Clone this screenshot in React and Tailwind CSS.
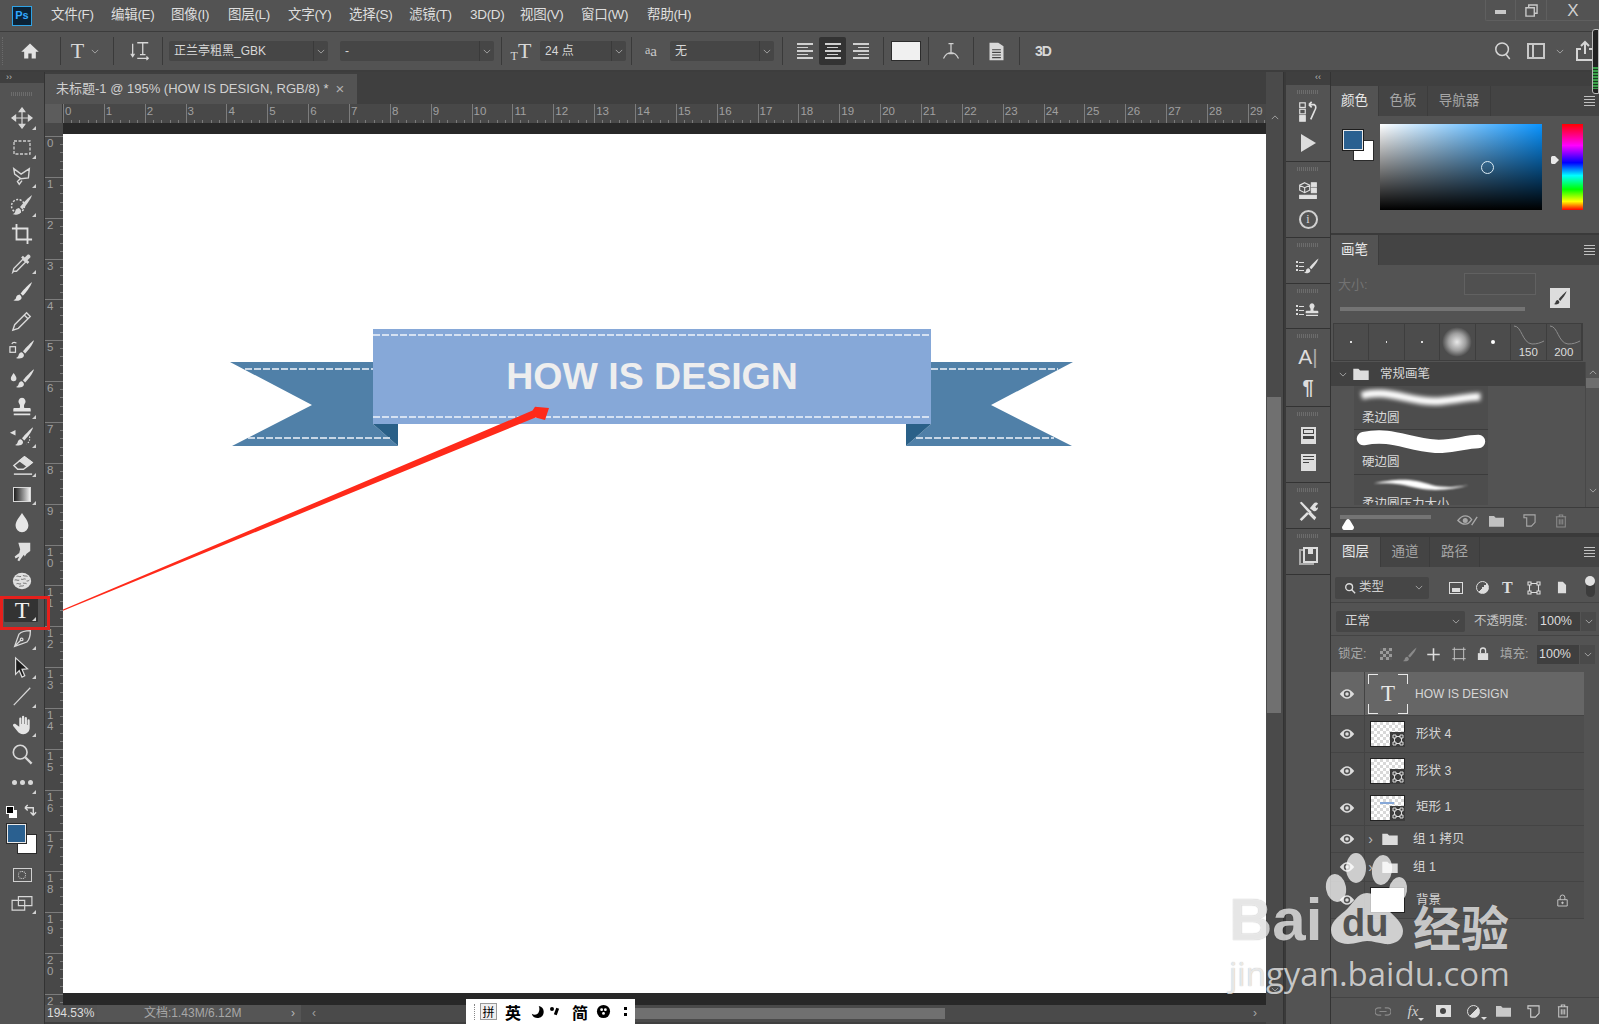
import React from "react";

const Ico = ({ className = "w-[22px] h-[22px]", children, box = "0 0 24 24" }) => (
  <svg viewBox={box} className={className} fill="none" stroke="none">
    {children}
  </svg>
);

const BrushShape = () => (
  <>
    <path d="M22 2c-3 2-9 8-12 12l2.4 2.4C15.500 13 20.500 7 22 2z" fill="currentColor" />
    <path d="M8.800 15c-2 .3-3.300 1.600-3.500 3.200-.2 1.300-1.100 2.300-2.800 2.900 3 1.100 7.300.8 8.400-1.800.5-1.300 0-2.800-2.100-4.300z" fill="currentColor" />
  </>
);

const Chevron = ({ className = "" }) => (
  <svg viewBox="0 0 10 6" className={`w-[8px] h-[5px] ${className}`} fill="none" stroke="#b5b5b5" strokeWidth="1">
    <path d="M1 1l4 4 4-4" />
  </svg>
);

const Sep = () => <div className="w-px h-[28px] bg-[#3a3a3a]" />;

const menuItems = [
  ["文件(F)", "w-[60px]"],
  ["编辑(E)", "w-[60px]"],
  ["图像(I)", "w-[57px]"],
  ["图层(L)", "w-[60px]"],
  ["文字(Y)", "w-[61px]"],
  ["选择(S)", "w-[60px]"],
  ["滤镜(T)", "w-[61px]"],
  ["3D(D)", "w-[50px]"],
  ["视图(V)", "w-[61px]"],
  ["窗口(W)", "w-[66px]"],
  ["帮助(H)", "w-[60px]"],
];

const MenuBar = () => (
  <div className="flex items-center h-[32px] bg-[#535353] border-b border-[#3c3c3c] relative">
    <div className="w-[20px] h-[20px] ml-[12px] mr-[19px] bg-[#0b2236] border border-[#2fa3e6] flex items-center justify-center text-[#31a8ff] text-[11px] font-bold">
      Ps
    </div>
    {menuItems.map(([t, w]) => (
      <div key={t} className={`${w} text-[13.500px] text-[#dedede] whitespace-nowrap tracking-[-0.3px]`}>
        {t}
      </div>
    ))}
    <div className="ml-auto flex items-center h-[21px] self-start border-b border-l border-[#5f5f5f] rounded-bl-[2px]">
      <div className="w-[30px] pl-[-2px] h-full flex items-center justify-center border-r border-[#5f5f5f]">
        <div className="w-[11px] h-[4px] mt-[4px] bg-[#c8c8c8]" />
      </div>
      <div className="w-[31px] h-full flex items-center justify-center border-r border-[#5f5f5f]">
        <svg viewBox="0 0 14 14" className="w-[13px] h-[13px]" fill="none" stroke="#c8c8c8" strokeWidth="1.500">
          <path d="M4 4V1h9v9h-3M1 4h9v9H1z" />
        </svg>
      </div>
      <div className="w-[52px] h-full flex items-center justify-center text-[#d0d0d0] text-[17px] leading-none">X</div>
    </div>
  </div>
);

const Select = ({ className, text, chevW = "w-[15px]" }) => (
  <div className={`flex h-[20px] items-stretch bg-[#464646] rounded-[2px] ${className}`}>
    <div className="flex-1 text-[12px] text-[#d8d8d8] px-[5px] leading-[20px] whitespace-nowrap overflow-hidden">{text}</div>
    <div className={`${chevW} border-l border-[#3a3a3a] flex items-center justify-center`}>
      <Chevron />
    </div>
  </div>
);

const AlignIcon = ({ widths }) => (
  <div className={`flex flex-col gap-[2px] w-[16px] ${widths[0]}`}>
    {widths[1].map((w, i) => (
      <div key={i} className={`h-[1.500px] bg-[#d0d0d0] ${w}`} />
    ))}
  </div>
);

const alignRows = ["w-[16px]", "w-[11px]", "w-[16px]", "w-[11px]", "w-[16px]"];

const OptionsBar = () => (
  <div className="flex items-center h-[40px] bg-[#535353] border-b-2 border-[#3d3d3d] relative">
    <div className="w-[6px] ml-[2px] h-[28px] border-l border-dotted border-[#6a6a6a]" />
    <div className="w-[52px] pr-[8px] flex justify-center text-[#e2e2e2]">
      <Ico className="w-[20px] h-[20px]">
        <path d="M12 3L1.500 13H5v8h5v-6h4v6h5v-8h3.500z" fill="currentColor" />
      </Ico>
    </div>
    <Sep />
    <div className="w-[52px] pr-[4px] flex items-center justify-center gap-[7px]">
      <span className="font-['Liberation_Serif'] text-[22px] leading-none text-[#d8d8d8]">T</span>
      <Chevron />
    </div>
    <Sep />
    <div className="w-[48px] pl-[3px] flex justify-center text-[#d8d8d8]">
      <svg viewBox="0 0 24 24" className="w-[22px] h-[22px]" fill="none" stroke="currentColor" strokeWidth="1.400">
        <path d="M4 4v13M2 15l2 3 2-3M9 3h12M15 3v13M12 16h6M9 20h12M19 18l2 2-2 2" />
      </svg>
    </div>
    <Sep />
    <Select className="w-[159px] ml-[6px]" text="正兰亭粗黑_GBK" />
    <Select className="w-[154px] ml-[12px]" text="-" />
    <div className="ml-[7px]"><Sep /></div>
    <div className="w-[38px] flex justify-center items-end text-[#d8d8d8] font-['Liberation_Serif'] leading-none">
      <span className="text-[12px]">T</span>
      <span className="text-[22px]">T</span>
    </div>
    <Select className="w-[86px]" text="24 点" />
    <div className="ml-[5px]"><Sep /></div>
    <div className="w-[38px] text-center text-[#c8c8c8] text-[15px] leading-none font-['Liberation_Serif']">
      <span className="text-[12px] align-top">a</span>a
    </div>
    <Select className="w-[104px]" text="  无" />
    <div className="ml-[8px]"><Sep /></div>
    <div className="flex items-center ml-[8px]">
      <div className="w-[28px] flex justify-center">
        <AlignIcon widths={["items-start", alignRows]} />
      </div>
      <div className="w-[27px] h-[28px] bg-[#333333] rounded-[2px] flex items-center justify-center">
        <AlignIcon widths={["items-center", alignRows]} />
      </div>
      <div className="w-[30px] flex justify-center">
        <AlignIcon widths={["items-end", alignRows]} />
      </div>
    </div>
    <div className="ml-[7px]"><Sep /></div>
    <div className="w-[30px] h-[20px] ml-[7px] mr-[7px] bg-[#f0f0f0] border border-[#2c2c2c]" />
    <Sep />
    <div className="w-[44px] flex justify-center text-[#d0d0d0]">
      <svg viewBox="0 0 24 24" className="w-[20px] h-[22px]" fill="none" stroke="currentColor" strokeWidth="1.500">
        <path d="M9 3h6M12 3v12M9 15h6M3 21c3-6 6-7 9-7s6 1 9 7" />
      </svg>
    </div>
    <Sep />
    <div className="w-[45px] flex justify-center text-[#d8d8d8]">
      <svg viewBox="0 0 20 24" className="w-[19px] h-[21px]">
        <path d="M2 2h10l6 4v16H2z" fill="currentColor" />
        <path d="M5 10h10M5 13h10M5 16h10M5 19h10" stroke="#444" strokeWidth="1.200" />
      </svg>
    </div>
    <Sep />
    <div className="w-[46px] text-center text-[14px] font-bold text-[#d8d8d8] tracking-[-1px] font-['Liberation_Sans']">3D</div>
    <div className="ml-auto flex items-center mr-[4px] text-[#d5d5d5]">
      <svg viewBox="0 0 20 22" className="w-[18px] h-[20px]" fill="none" stroke="currentColor" strokeWidth="1.700">
        <circle cx="9" cy="9" r="7" />
        <path d="M13.500 15l4 5" />
      </svg>
      <div className="w-[18px] h-[16px] ml-[15px] border-2 border-[#c8c8c8] flex">
        <div className="w-[5px] border-r-2 border-[#c8c8c8]" />
      </div>
      <Chevron className="ml-[11px]" />
      <svg viewBox="0 0 20 22" className="w-[20px] h-[22px] ml-[11px]" fill="none" stroke="currentColor" strokeWidth="2">
        <path d="M6 9H2v11h16V9h-4M10 14V2M6 6l4-4 4 4" />
      </svg>
    </div>
  </div>
);

const tools = [
  {
    corner: true,
    icon: (
      <svg viewBox="0 0 24 24" className="w-[22px] h-[22px]" fill="#d8d8d8" stroke="#d8d8d8" strokeWidth="1.300">
        <path d="M12 3v18M3 12h18" fill="none" />
        <path d="M12 1l3 4H9zM12 23l3-4H9zM1 12l4-3v6zM23 12l-4-3v6z" />
      </svg>
    ),
  },
  {
    corner: true,
    icon: (
      <svg viewBox="0 0 18 15" className="w-[18px] h-[15px]" fill="none" stroke="#d0d0d0" strokeWidth="1.300" strokeDasharray="3 1.500">
        <rect x="1" y="1" width="16" height="13" />
      </svg>
    ),
  },
  {
    corner: true,
    icon: (
      <svg viewBox="0 0 24 24" className="w-[22px] h-[22px] text-[#d8d8d8]" fill="none" stroke="currentColor" strokeWidth="1.500">
        <path d="M3 4l8 6 9-6-1 10-8 1-7-5zM10 15l-3 3 2 3 3-4" />
      </svg>
    ),
  },
  {
    corner: true,
    icon: (
      <svg viewBox="0 0 24 24" className="w-[24px] h-[24px] text-[#d8d8d8]">
        <circle cx="8" cy="13" r="6.500" fill="none" stroke="currentColor" strokeWidth="1.500" strokeDasharray="2 1.500" />
        <BrushShape />
      </svg>
    ),
  },
  {
    icon: (
      <svg viewBox="0 0 24 24" className="w-[22px] h-[22px] text-[#e0e0e0]" fill="none" stroke="currentColor" strokeWidth="2">
        <path d="M6 1v17h17M1 6h17v17" />
      </svg>
    ),
  },
  {
    corner: true,
    icon: (
      <svg viewBox="0 0 24 24" className="w-[22px] h-[22px] text-[#d8d8d8]">
        <path d="M3 21l-1 1 1-4L13 8l3 3L6 21z" fill="none" stroke="currentColor" strokeWidth="1.500" />
        <path d="M11 6l7 7 2-2-2-2 3-3c1-1.500-1-4-3-3l-3 3-2-2z" fill="currentColor" />
      </svg>
    ),
  },
  { icon: <svg viewBox="0 0 24 24" className="w-[23px] h-[23px] text-[#e4e4e4]"><BrushShape /></svg> },
  {
    icon: (
      <svg viewBox="0 0 24 24" className="w-[22px] h-[22px] text-[#d8d8d8]" fill="none" stroke="currentColor" strokeWidth="1.500">
        <path d="M17 3l4 4L8 20l-6 2 2-6zM14.500 5.500l4 4" />
      </svg>
    ),
  },
  {
    icon: (
      <svg viewBox="0 0 28 24" className="w-[26px] h-[23px] text-[#e0e0e0]">
        <svg x="5" width="24" height="24" viewBox="0 0 24 24"><BrushShape /></svg>
        <rect x="1" y="9" width="6" height="6" fill="none" stroke="currentColor" strokeWidth="1.300" />
        <path d="M3 6c1-2 3-2 5-1" fill="none" stroke="currentColor" strokeWidth="1.200" />
      </svg>
    ),
  },
  {
    icon: (
      <svg viewBox="0 0 28 24" className="w-[26px] h-[23px] text-[#e0e0e0]">
        <svg x="5" width="24" height="24" viewBox="0 0 24 24"><BrushShape /></svg>
        <path d="M5 6c2 3 3 4 3 6a3 3 0 0 1-6 0c0-2 1-3 3-6z" fill="currentColor" />
      </svg>
    ),
  },
  {
    corner: true,
    icon: (
      <svg viewBox="0 0 24 24" className="w-[22px] h-[22px] text-[#e4e4e4]" fill="currentColor">
        <path d="M12 2a4 4 0 0 1 3 6.500c-1 1.500-1 3-.5 4.500H20c1 0 1.500.5 1.500 1.500V17h-19v-2.500C2.500 13.500 3 13 4 13h5.500c.5-1.500.5-3-.5-4.500A4 4 0 0 1 12 2zM3 19h18v2H3z" />
      </svg>
    ),
  },
  {
    corner: true,
    icon: (
      <svg viewBox="0 0 28 24" className="w-[26px] h-[23px] text-[#e0e0e0]">
        <svg x="4" width="24" height="24" viewBox="0 0 24 24"><BrushShape /></svg>
        <path d="M1 8l6-3v6z" fill="currentColor" />
        <path d="M22 12c1 3 0 6-3 8" fill="none" stroke="currentColor" strokeWidth="1.200" strokeDasharray="1.500 1.500" />
      </svg>
    ),
  },
  {
    corner: true,
    icon: (
      <svg viewBox="0 0 24 24" className="w-[23px] h-[23px] text-[#e0e0e0]" fill="none" stroke="currentColor" strokeWidth="1.500">
        <path d="M14 3l8 6-9 7H7l-4-4z" />
        <path d="M14 3l8 6-5 4-8-6z" fill="currentColor" />
        <path d="M3 21h19" />
      </svg>
    ),
  },
  {
    corner: true,
    icon: <div className="w-[18px] h-[15px] border border-[#d8d8d8] bg-gradient-to-r from-[#202020] to-[#f2f2f2]" />,
  },
  {
    icon: (
      <svg viewBox="0 0 24 24" className="w-[22px] h-[22px]" fill="#e6e6e6">
        <path d="M12 1c4 6 7 9 7 14a7 7 0 0 1-14 0c0-5 3-8 7-14z" />
      </svg>
    ),
  },
  {
    icon: (
      <svg viewBox="0 0 24 24" className="w-[22px] h-[22px]" fill="#e0e0e0">
        <path d="M8 2h13v9l-4 3-2 3-1-2-3 4-2 3-2-1 2-4-4 2-1-2 5-4 1-4z" />
      </svg>
    ),
  },
  {
    icon: (
      <svg viewBox="0 0 24 24" className="w-[22px] h-[22px]">
        <ellipse cx="12" cy="12" rx="10" ry="9" fill="#e0e0e0" />
        <path d="M6 7c2-1 3 1 5 0M13 6c2 1 3 0 5 1M4 11c2-1 3 1 5 0M11 10c2 1 3-1 5 0M17 12c1 0 2 0 3-1M6 15c2-1 3 1 5 0M13 14c1 1 3 0 4 1M9 18c1-1 3 0 5-1" stroke="#666" strokeWidth="1" fill="none" />
      </svg>
    ),
  },
  {
    corner: true,
    active: true,
    icon: <span className="font-['Liberation_Serif'] text-[24px] leading-none text-[#f0f0f0]">T</span>,
  },
  {
    corner: true,
    icon: (
      <svg viewBox="0 0 24 24" className="w-[21px] h-[21px] text-[#d8d8d8]" fill="none" stroke="currentColor" strokeWidth="1.500">
        <path d="M21 3c-5 0-10 1-13 4L3 21l14-5c3-3 4-8 4-13zM3 21l7-7" />
        <circle cx="11" cy="13" r="1.500" />
      </svg>
    ),
  },
  {
    corner: true,
    icon: (
      <svg viewBox="0 0 24 24" className="w-[22px] h-[22px]">
        <path d="M5 2l13 12-6 .5 3 7-3 1.500-3-7-4 4z" fill="#1d1d1d" stroke="#dcdcdc" strokeWidth="1.300" />
      </svg>
    ),
  },
  {
    corner: true,
    icon: (
      <svg viewBox="0 0 24 24" className="w-[22px] h-[22px]" fill="none" stroke="#d8d8d8" strokeWidth="1.300">
        <path d="M3 22L21 3" />
      </svg>
    ),
  },
  {
    corner: true,
    icon: (
      <svg viewBox="0 0 24 24" className="w-[22px] h-[22px]" fill="#e4e4e4">
        <path d="M9 5a1.200 1.200 0 0 1 2.400 0v6h.6V3a1.200 1.200 0 0 1 2.400 0v8h.6V4.500a1.200 1.200 0 0 1 2.400 0V12h.6V7a1.200 1.200 0 0 1 2.400 0v8c0 4-3 7-7 7-3 0-5-1-7-4l-4-5c-1-1.500 1-3 2.500-2L9 14z" />
      </svg>
    ),
  },
  {
    icon: (
      <svg viewBox="0 0 24 24" className="w-[22px] h-[22px]" fill="none" stroke="#d8d8d8" strokeWidth="1.800">
        <circle cx="10" cy="10" r="7.500" />
        <path d="M15.500 15.500l7 7" strokeWidth="2.500" />
      </svg>
    ),
  },
  {
    corner: true,
    icon: (
      <div className="flex gap-[3px]">
        <div className="w-[5px] h-[5px] rounded-full bg-[#d8d8d8]" />
        <div className="w-[5px] h-[5px] rounded-full bg-[#d8d8d8]" />
        <div className="w-[5px] h-[5px] rounded-full bg-[#d8d8d8]" />
      </div>
    ),
  },
];

const ToolBar = () => (
  <div className="w-[44px] flex flex-col shrink-0 bg-[#535353] border-r border-[#333333] box-content">
    <div className="h-[11px] bg-[#3f3f3f] text-[#bdbdbd] text-[9px] leading-[10px] pl-[6px]">››</div>
    <div className="h-[21px] flex items-center justify-center">
      <div className="w-[22px] h-[4px] bg-[repeating-linear-gradient(90deg,#6c6c6c_0,#6c6c6c_1px,transparent_1px,transparent_2px)]" />
    </div>
    {tools.map((t, i) => (
      <div key={i} className="h-[28.900px] flex items-center justify-center relative">
        {t.active && <div className="absolute left-[4px] top-[1px] w-[34px] h-[26px] bg-[#333333] rounded-[1px]" />}
        <div className="relative flex items-center justify-center">{t.icon}</div>
        {t.corner && (
          <div className="absolute right-[8px] bottom-[3px] w-0 h-0 border-l-[4px] border-l-transparent border-b-[4px] border-b-[#d0d0d0]" />
        )}
      </div>
    ))}
    <div className="h-[27px] relative">
      <div className="absolute left-[9px] top-[13px] w-[8px] h-[8px] bg-white" />
      <div className="absolute left-[6px] top-[9px] w-[8px] h-[8px] bg-black border border-white" />
      <svg viewBox="0 0 14 14" className="absolute left-[24px] top-[7px] w-[13px] h-[13px]" fill="none" stroke="#dcdcdc" strokeWidth="1.500">
        <path d="M1 4h9v8M1 4l3-3M1 4l3 3M10 12l-3-3M10 12l3-3" />
      </svg>
    </div>
    <div className="h-[40px] relative">
      <div className="absolute left-[17px] top-[10px] w-[20px] h-[20px] bg-white border border-[#2a2a2a]" />
      <div className="absolute left-[6px] top-[-1px] w-[21px] h-[21px] bg-[#2a6090] border border-[#2a2a2a] outline outline-1 outline-[#e8e8e8] outline-offset-[-2px]" />
    </div>
    <div className="h-[28px] flex items-center justify-center mt-[-3px]">
      <div className="w-[19px] h-[14px] border border-[#d0d0d0] flex items-center justify-center">
        <div className="w-[8px] h-[8px] rounded-full border border-dotted border-[#e0e0e0]" />
      </div>
    </div>
    <div className="h-[28px] flex items-center justify-center relative">
      <svg viewBox="0 0 24 20" className="w-[22px] h-[18px]" fill="none" stroke="#d8d8d8" strokeWidth="1.300">
        <path d="M8 3h15v10H8zM1 7h14v11H1z" fill="#535353" />
      </svg>
      <div className="absolute right-[8px] bottom-[3px] w-0 h-0 border-l-[4px] border-l-transparent border-b-[4px] border-b-[#d0d0d0]" />
    </div>
  </div>
);

const hUnits = Array.from({ length: 30 }, (_, i) => i);
const vUnits = ["0", "1", "2", "3", "4", "5", "6", "7", "8", "9", "10", "11", "12", "13", "14", "15", "16", "17", "18", "19", "20", "2"];

const HRuler = () => (
  <div className="h-[19px] flex bg-[#484848] overflow-hidden">
    <div className="w-[18px] shrink-0 bg-[#5c5c5c] border-r border-[#3a3a3a]" />
    {hUnits.map((n) => (
      <div key={n} className="w-[40.860px] shrink-0 relative border-l border-[#7c7c7c] text-[11.500px] leading-[15px] pl-[1px] text-[#a0a0a0] font-['Liberation_Sans']">
        {n}
        <div className="absolute left-0 right-0 bottom-0 h-[3px] bg-[repeating-linear-gradient(90deg,transparent_0,transparent_7.170px,#7a7a7a_7.170px,#7a7a7a_8.170px)]" />
      </div>
    ))}
  </div>
);

const VRuler = () => (
  <div className="w-[18px] shrink-0 bg-[#484848] overflow-hidden pt-[13px]">
    {vUnits.map((n, idx) => (
      <div key={idx} className="h-[40.860px] relative border-t border-[#7c7c7c] text-[11.500px] leading-[11px] pt-[1px] pl-[2px] text-[#a0a0a0] font-['Liberation_Sans']">
        {n.split("").map((c, i) => (
          <div key={i}>{c}</div>
        ))}
        <div className="absolute top-0 bottom-0 right-0 w-[3px] bg-[repeating-linear-gradient(180deg,transparent_0,transparent_7.170px,#7a7a7a_7.170px,#7a7a7a_8.170px)]" />
      </div>
    ))}
  </div>
);

const Canvas = () => (
  <div className="flex-1 bg-[#282828] pt-[11px] pb-[12px] min-w-0">
    <div className="h-full bg-white relative">
      <svg viewBox="63 134 1202 859" className="absolute left-0 top-0 w-[1202px] h-[859px]">
        <path d="M230 362H373V424L398 446H232L312 405Z" fill="#5080a8" />
        <path d="M373 424H398V446Z" fill="#2a6088" />
        <path d="M931 362H1073L991 405L1072 446H906L931 424Z" fill="#5080a8" />
        <path d="M931 424H906V446Z" fill="#2a6088" />
        <rect x="373" y="329" width="558" height="95" fill="#86a8d8" />
        <g stroke="#f0f4fa" strokeWidth="1.300" strokeDasharray="7 2">
          <path d="M373 335H931M373 417H931" />
          <path d="M245 369H373M248 438H392M931 369H1058M916 438H1054" />
        </g>
      </svg>
      <div className="absolute left-[310px] top-[195px] w-[558px] h-[95px] flex items-center justify-center text-[37.500px] font-bold text-[#eeeeee] font-['Liberation_Sans'] whitespace-nowrap">
        HOW IS DESIGN
      </div>
    </div>
  </div>
);

const DocArea = () => (
  <div className="w-[1221px] shrink-0 flex flex-col bg-[#3f3f3f]">
    <div className="h-[32px] pt-[2px] flex">
      <div className="w-[312px] bg-[#535353] flex items-center pl-[11px] text-[#d0d0d0] text-[13px] whitespace-nowrap">
        未标题-1 @ 195% (HOW IS DESIGN, RGB/8) *
        <span className="ml-[7px] text-[#b0b0b0] text-[15px]">×</span>
      </div>
    </div>
    <HRuler />
    <div className="h-[882px] flex">
      <VRuler />
      <Canvas />
    </div>
  </div>
);

const VScroll = () => (
  <div className="w-[18px] shrink-0 bg-[#4a4a4a] flex flex-col items-center pt-[51px] border-r border-[#333333]">
    <div className="w-[8px] h-[8px] flex items-center justify-center rotate-180 mt-[-9px]">
      <Chevron />
    </div>
    <div className="w-[14px] h-[316px] bg-[#707070] mt-[275px] -ml-[2px]" />
    <div className="mt-[274px]"><Chevron /></div>
  </div>
);

const StatusBar = () => (
  <div className="absolute left-[45px] top-[1005px] w-[1238px] h-[17px] flex items-stretch bg-[#4a4a4a] text-[12px] leading-[17px] font-['Liberation_Sans','Noto_Sans_CJK_SC',sans-serif] border-b-0">
    <div className="w-[52px] pl-[2px] text-[#dddddd] bg-[#535353]">194.53%</div>
    <div className="w-[204px] pl-[47px] text-[#a8a8a8] bg-[#555555] flex">
      文档:1.43M/6.12M
      <span className="ml-auto mr-[6px] text-[#b8b8b8]">›</span>
    </div>
    <div className="pl-[11px] text-[#a0a0a0]">‹</div>
    <div className="ml-[303px] w-[326px] my-[3px] bg-[#707070]" />
    <div className="ml-auto mr-[26px] text-[#a8a8a8]">›</div>
  </div>
);

const Grip = () => (
  <div className="h-[9px] flex items-center justify-center">
    <div className="w-[22px] h-[4px] bg-[repeating-linear-gradient(90deg,#6c6c6c_0,#6c6c6c_1px,transparent_1px,transparent_2px)]" />
  </div>
);

const ListLines = () => (
  <div className="flex flex-col gap-[2px]">
    <div className="flex items-center gap-[1px]"><div className="w-[2px] h-[2px] bg-[#ddd]" /><div className="w-[5px] h-[1px] bg-[#ddd]" /></div>
    <div className="flex items-center gap-[1px]"><div className="w-[2px] h-[2px] bg-[#ddd]" /><div className="w-[5px] h-[1px] bg-[#ddd]" /></div>
    <div className="flex items-center gap-[1px]"><div className="w-[2px] h-[2px] bg-[#ddd]" /><div className="w-[5px] h-[1px] bg-[#ddd]" /></div>
  </div>
);

const DockGroup = ({ h, children }) => (
  <div className={`${h} flex flex-col items-center border-b border-[#333333] pt-[2px]`}>
    <Grip />
    <div className="flex-1 flex flex-col items-center justify-evenly text-[#e0e0e0]">{children}</div>
  </div>
);

const Dock = () => (
  <div className="w-[44px] shrink-0 bg-[#535353] border-r border-[#333333] box-content ml-[2px]">
    <div className="h-[13px] bg-[#3f3f3f] text-[#bdbdbd] text-[9px] leading-[11px] pl-[29px]">‹‹</div>
    <DockGroup h="h-[77px]">
      <svg viewBox="0 0 24 24" className="w-[22px] h-[24px] -mt-[5px]" fill="none" stroke="currentColor" strokeWidth="1.300">
        <rect x="3" y="2" width="6" height="5" />
        <rect x="3" y="9" width="6" height="5" />
        <rect x="3" y="16" width="6" height="6" fill="currentColor" />
        <path d="M13 4h6c2 1 2 4 0 7l-4 9M13 4l3-3M13 4l3 3" strokeWidth="1.800" />
      </svg>
      <div className="w-0 h-0 border-y-[9px] border-y-transparent border-l-[15px] border-l-[#dddddd]" />
    </DockGroup>
    <DockGroup h="h-[76px]">
      <svg viewBox="0 0 24 24" className="w-[20px] h-[20px]" fill="none" stroke="currentColor" strokeWidth="1.300">
        <path d="M8 2l6 3v6l-6 3-6-3V5zM2 5l6 3 6-3M8 8v6" />
        <path d="M16 2h6v5h-6zM16 9h6v5h-6z" fill="currentColor" />
        <path d="M2 17h20v4H2z" fill="currentColor" />
      </svg>
      <div className="w-[19px] h-[19px] rounded-full border-2 border-[#d0d0d0] flex items-center justify-center text-[12px] leading-none font-['Liberation_Serif'] text-[#d8d8d8]">i</div>
    </DockGroup>
    <DockGroup h="h-[46px]">
      <div className="flex items-center">
        <ListLines />
        <svg viewBox="0 0 24 24" className="w-[18px] h-[18px] -ml-[2px] text-[#e0e0e0]"><BrushShape /></svg>
      </div>
    </DockGroup>
    <DockGroup h="h-[45px]">
      <div className="flex items-center -mt-[3px]">
        <ListLines />
        <svg viewBox="0 0 24 24" className="w-[16px] h-[18px]" fill="#e0e0e0">
          <path d="M12 2a4 4 0 0 1 3 6.500c-1 1.500-1 3-.5 4.500H20c1 0 1.500.5 1.500 1.500V17h-19v-2.500C2.500 13.500 3 13 4 13h5.500c.5-1.500.5-3-.5-4.500A4 4 0 0 1 12 2zM3 19h18v2H3z" />
        </svg>
      </div>
    </DockGroup>
    <DockGroup h="h-[78px]">
      <div className="text-[21px] leading-none text-[#dddddd] font-['Liberation_Sans'] -mt-[3px]">A<span className="font-light text-[#aaaaaa]">|</span></div>
      <div className="text-[20px] leading-none font-bold text-[#dddddd] font-['Liberation_Sans']">¶</div>
    </DockGroup>
    <DockGroup h="h-[76px]">
      <div className="w-[15px] h-[17px] bg-[#dddddd] p-[2px] flex flex-col gap-[2px] -mt-[2px]">
        <div className="h-[5px] border border-[#444]" />
        <div className="h-[3px] bg-[#444]" />
      </div>
      <div className="w-[15px] h-[17px] bg-[#dddddd] p-[2px] flex flex-col gap-[2px]">
        <div className="h-[1px] bg-[#444]" />
        <div className="h-[1px] bg-[#444]" />
        <div className="h-[1px] w-[6px] bg-[#444]" />
      </div>
    </DockGroup>
    <DockGroup h="h-[46px]">
      <svg viewBox="0 0 24 24" className="w-[22px] h-[22px]" fill="#e0e0e0">
        <path d="M3 3l2-1 8 8 3 3-2 2-3-3zM21 18l-2 3-1-1zM3 21l8-8 2 2-8 8zM14 9l4-5c2-2 4-1 5 0l-3 3 1 2 2-1c0 3-3 5-5 4z" />
        <path d="M14 12l7 7-2 3-7-7z" />
      </svg>
    </DockGroup>
    <DockGroup h="h-[46px]">
      <div className="relative w-[19px] h-[18px] -mt-[2px]">
        <div className="absolute left-0 top-[2px] w-[15px] h-[16px] border-2 border-[#aaaaaa]" />
        <div className="absolute right-0 top-0 w-[15px] h-[16px] bg-[#535353] border-2 border-[#dddddd]" />
        <div className="absolute right-[5px] top-0 w-[5px] h-[7px] bg-[#dddddd]" />
      </div>
    </DockGroup>
  </div>
);

const MenuIcon = () => (
  <div className="ml-auto mr-[4px] flex flex-col gap-[2px] w-[11px] self-center">
    <div className="h-px bg-[#c0c0c0]" />
    <div className="h-px bg-[#c0c0c0]" />
    <div className="h-px bg-[#c0c0c0]" />
    <div className="h-px bg-[#c0c0c0]" />
  </div>
);

const PanelTabs = ({ tabs }) => (
  <div className="h-[30px] flex bg-[#444444] text-[13.500px] shrink-0">
    {tabs.map(([t, w], i) => (
      <div
        key={t}
        className={`${w} flex items-center justify-center border-r border-[#3c3c3c] ${i === 0 ? "bg-[#535353] text-[#e8e8e8]" : "text-[#a6a6a6]"}`}
      >
        {t}
      </div>
    ))}
    <MenuIcon />
  </div>
);

const ColorPanel = () => (
  <div className="h-[147px] bg-[#535353] shrink-0">
    <PanelTabs tabs={[["颜色", "w-[48px]"], ["色板", "w-[49px]"], ["导航器", "w-[63px]"]]} />
    <div className="flex pt-[8px]">
      <div className="w-[49px] relative h-[40px]">
        <div className="absolute left-[22px] top-[16px] w-[21px] h-[21px] bg-white border border-[#2a2a2a]" />
        <div className="absolute left-[11px] top-[5px] w-[22px] h-[22px] bg-[#2a6090] border border-[#1c1c1c] outline outline-1 outline-[#e8e8e8] outline-offset-[-2px]" />
      </div>
      <div className="w-[162px] h-[86px] relative bg-[linear-gradient(to_bottom,transparent,#000),linear-gradient(to_right,#ffffff,#0a94ff)]">
        <div className="absolute left-[101px] top-[37px] w-[13px] h-[13px] rounded-full border border-[#dcecf5]" />
      </div>
      <div className="w-[20px] relative">
        <svg viewBox="0 0 8 8" className="absolute left-[9px] top-[32px] w-[8px] h-[8px]" fill="#e8e8e8">
          <path d="M0 1.500C0 .5 1 0 2 0h2l4 4-4 4H2C1 8 0 7.500 0 6.500z" />
        </svg>
      </div>
      <div className="w-[21px] h-[86px] bg-[linear-gradient(to_bottom,#f00,#f0f_25%,#00f_45%,#0ff_60%,#0f0_76%,#ff0_90%,#f00)]" />
    </div>
  </div>
);

const brushCells = ["dot", "dot", "dot", "soft", "hard", "150", "200"];

const BrushTip = ({ kind }) => (
  <div className="flex-1 h-full border-r border-[#3e3e3e] flex items-center justify-center relative">
    {kind === "dot" && <div className="w-[1.500px] h-[1.500px] bg-[#dddddd]" />}
    {kind === "soft" && <div className="w-[30px] h-[30px] rounded-full bg-[radial-gradient(circle,#e8e8e8_0,#a0a0a0_40%,transparent_70%)]" />}
    {kind === "hard" && <div className="w-[4px] h-[4px] rounded-full bg-white" />}
    {(kind === "150" || kind === "200") && (
      <>
        <svg viewBox="0 0 36 20" className="absolute left-0 top-[1px] w-[36px] h-[20px]" fill="none" stroke="#8c8c8c" strokeWidth="1">
          <path d="M3 1c8 0 8 17 18 18 5 0 8-1 12-3" />
        </svg>
        <span className="absolute left-0 right-0 bottom-[1px] text-center text-[11.500px] leading-[14px] text-[#dddddd] font-['Liberation_Sans']">{kind}</span>
      </>
    )}
  </div>
);

const BrushItem = ({ h, label, stroke }) => (
  <div className={`${h} w-[134px] bg-[#4d4d4d] border-b border-[#3c3c3c] flex flex-col overflow-hidden shrink-0`}>
    {stroke}
    <div className="text-[12.500px] text-[#d8d8d8] pl-[8px] whitespace-nowrap">{label}</div>
  </div>
);

const BrushPanel = () => (
  <div className="h-[298px] bg-[#535353] shrink-0 mt-[2px] flex flex-col">
    <PanelTabs tabs={[["画笔", "w-[48px]"]]} />
    <div className="flex pt-[8px] h-[37px] shrink-0">
      <div className="w-[133px] pl-[7px] pt-[2px] text-[13px] text-[#727272]">大小:</div>
      <div className="w-[72px] h-[22px] border border-[#616161] bg-[#505050]" />
      <div className="ml-[14px] mt-[15px] w-[20px] h-[20px] bg-[#dddddd] flex items-center justify-center relative">
        <svg viewBox="0 0 24 24" className="w-[16px] h-[16px] text-[#3c3c3c]"><BrushShape /></svg>
      </div>
    </div>
    <div className="w-[185px] h-[4px] ml-[9px] mt-[5px] bg-[#747474] shrink-0" />
    <div className="w-[250px] h-[38px] ml-[2px] mt-[12px] flex border border-[#3e3e3e] bg-[#4c4c4c] shrink-0">
      {brushCells.map((k, i) => (
        <BrushTip key={i} kind={k} />
      ))}
    </div>
    <div className="flex flex-1 min-h-0 mt-[1px]">
      <div className="w-[255px] flex flex-col">
        <div className="h-[24px] bg-[#414141] flex items-center pl-[8px] text-[12.500px] text-[#d8d8d8] shrink-0">
          <Chevron />
          <svg viewBox="0 0 18 14" className="w-[16px] h-[12px] ml-[6px] mr-[11px]" fill="#dddddd">
            <path d="M0 1h6l2 2h10v11H0z" />
          </svg>
          常规画笔
        </div>
        <div className="pl-[23px] flex flex-col overflow-hidden h-[119px]">
          <BrushItem
            h="h-[44px]"
            label="柔边圆"
            stroke={
              <svg viewBox="0 0 134 24" className="w-[134px] h-[23px] shrink-0">
                <path d="M5 10c30-8 50 8 80 6 20-1 30-5 44-5" stroke="#ffffff" strokeWidth="8" fill="none" className="blur-[2px]" />
              </svg>
            }
          />
          <BrushItem
            h="h-[45px]"
            label="硬边圆"
            stroke={
              <svg viewBox="0 0 134 24" className="w-[134px] h-[23px] shrink-0">
                <path d="M7 9c30-6 45 6 75 8 20 1 30-5 45-5" stroke="#ffffff" strokeWidth="14" strokeLinecap="round" fill="none" />
              </svg>
            }
          />
          <BrushItem
            h="h-[45px]"
            label="柔边圆压力大小"
            stroke={
              <svg viewBox="0 0 134 24" className="w-[134px] h-[20px] shrink-0">
                <path d="M10 10c30-6 45-6 70 2 15 4 35 2 44 0-15 5-40 8-60 4-20-5-30-7-54-6z" fill="#ffffff" className="blur-[1px]" />
              </svg>
            }
          />
        </div>
      </div>
      <div className="w-[14px] border-l border-[#484848] flex flex-col items-center text-[#888] pt-[8px]">
        <Chevron className="rotate-180" />
        <div className="w-[14px] h-[10px] bg-[#6e6e6e] mt-[3px]" />
        <Chevron className="mt-[100px]" />
      </div>
    </div>
    <div className="h-[26px] border-t border-[#3c3c3c] flex items-center relative shrink-0">
      <div className="w-[91px] h-[4px] ml-[9px] mb-[8px] bg-[#747474]" />
      <svg viewBox="0 0 12 11" className="absolute left-[11px] bottom-[3px] w-[12px] h-[11px]" fill="#ffffff">
        <path d="M6 0c1 0 2 1 3 3l3 5c0 2-1 3-2 3H2c-1 0-2-1-2-3l3-5c1-2 2-3 3-3z" />
      </svg>
      <svg viewBox="0 0 24 14" className="w-[22px] h-[13px] ml-[26px] text-[#a8a8a8]" fill="none" stroke="currentColor" strokeWidth="1.500">
        <path d="M1 7c3-4 6-5 8-5s5 1 7 4c-2 3-5 5-7 5S4 10 1 7zM16 12l6-9" />
        <circle cx="9" cy="7" r="2" fill="currentColor" />
      </svg>
      <svg viewBox="0 0 18 14" className="w-[15px] h-[12px] ml-[10px]" fill="#c0c0c0"><path d="M0 1h6l2 2h10v11H0z" /></svg>
      <svg viewBox="0 0 14 14" className="w-[13px] h-[13px] ml-[19px]" fill="none" stroke="#a8a8a8" strokeWidth="1.200"><path d="M1 1h12v8l-4 4H4V4H1z" /></svg>
      <svg viewBox="0 0 14 16" className="w-[12px] h-[14px] ml-[19px]" fill="none" stroke="#8c8c8c" strokeWidth="1.200"><path d="M1 3h12M5 3V1h4v2M2 3v12h10V3M5 6v6M7 6v6M9 6v6" /></svg>
    </div>
  </div>
);

const Eye = () => (
  <svg viewBox="0 0 20 14" className="w-[16px] h-[12px]">
    <path d="M1 7c3-4 6-6 9-6s6 2 9 6c-3 4-6 6-9 6S4 11 1 7z" fill="#dddddd" />
    <circle cx="10" cy="7" r="4" fill="#535353" />
    <circle cx="10" cy="7" r="2.200" fill="#dddddd" />
  </svg>
);

const ShapeThumb = ({ bar }) => (
  <div className="w-[35px] h-[26px] border border-[#222222] bg-[repeating-conic-gradient(#d8d8d8_0_25%,#ffffff_0_50%)] bg-[length:6px_6px] relative">
    {bar && <div className="absolute left-[9px] top-[6px] w-[14px] h-[2px] bg-[#86a8d8]" />}
    <div className="absolute right-[-1px] bottom-[-1px] w-[15px] h-[15px] bg-[#3c3c3c] flex items-center justify-center">
      <svg viewBox="0 0 12 12" className="w-[12px] h-[12px]" fill="none" stroke="#dddddd" strokeWidth="1">
        <path d="M2.500 2.500h7v7h-7z" />
        <path d="M1 1h3v3H1zM8 1h3v3H8zM1 8h3v3H1zM8 8h3v3H8z" fill="#3c3c3c" />
      </svg>
    </div>
  </div>
);

const FolderGlyph = () => (
  <svg viewBox="0 0 18 14" className="w-[16px] h-[12px]" fill="#dddddd">
    <path d="M0 1h6l2 2h10v11H0z" />
  </svg>
);

const LayerRow = ({ h, selected, thumb, name, chevron, locked, nameClass = "pl-[11px]" }) => (
  <div className={`${h} w-[253px] flex items-center border-b border-[#444444] ${selected ? "bg-[#666666]" : "bg-[#4e4e4e]"}`}>
    <div className="w-[34px] h-full flex items-center justify-center border-r border-[#444444] pr-[1px]">
      <Eye />
    </div>
    <div className="w-[3px] flex justify-center">{chevron && <span className="translate-x-[4px] text-[#bdbdbd] text-[14px] leading-none">›</span>}</div>
    {thumb}
    <div className={`text-[12.500px] text-[#d6d6d6] whitespace-nowrap ${nameClass}`}>{name}</div>
    {locked && (
      <svg viewBox="0 0 14 16" className="ml-auto mr-[16px] w-[11px] h-[13px]" fill="none" stroke="#c8c8c8" strokeWidth="1.200">
        <path d="M1 7h12v8H1zM4 7V4a3 3 0 0 1 6 0v3" />
        <circle cx="7" cy="11" r="1" fill="#c8c8c8" />
      </svg>
    )}
  </div>
);

const LayersPanel = () => (
  <div className="flex-1 bg-[#535353] mt-[4px] flex flex-col">
    <PanelTabs tabs={[["图层", "w-[50px]"], ["通道", "w-[49px]"], ["路径", "w-[50px]"]]} />
    <div className="h-[36px] flex items-center border-b border-[#444444] pl-[4px] pt-[6px] shrink-0">
      <div className="w-[94px] h-[22px] bg-[#464646] rounded-[2px] flex items-center pl-[9px] text-[12.500px] text-[#cfcfcf]">
        <svg viewBox="0 0 14 14" className="w-[12px] h-[12px] mr-[3px]" fill="none" stroke="#dddddd" strokeWidth="1.600"><circle cx="6" cy="6" r="4" /><path d="M9 9l4 4" /></svg>
        类型
        <Chevron className="ml-auto mr-[6px]" />
      </div>
      <div className="w-[14px] h-[12px] ml-[20px] border border-[#dddddd] relative">
        <div className="absolute left-[2px] bottom-[1px] w-[8px] h-[4px] bg-[#dddddd]" />
      </div>
      <div className="w-[13px] h-[13px] ml-[13px] rounded-full border border-[#dddddd] bg-[linear-gradient(135deg,transparent_50%,#dddddd_50%)]" />
      <span className="ml-[13px] font-['Liberation_Serif'] font-bold text-[16px] text-[#dddddd] leading-none">T</span>
      <svg viewBox="0 0 14 14" className="w-[14px] h-[14px] ml-[14px]" fill="none" stroke="#dddddd" strokeWidth="1.100">
        <path d="M2.500 2.500h9v9h-9z" />
        <path d="M1 1h3v3H1zM10 1h3v3h-3zM1 10h3v3H1zM10 10h3v3h-3z" fill="#535353" />
      </svg>
      <svg viewBox="0 0 14 16" className="w-[12px] h-[13px] ml-[15px]" fill="#dddddd"><path d="M2 1h6l4 4v10H2z" /></svg>
      <div className="ml-[18px] w-[9px] h-[18px] rounded-full bg-[#3c3c3c] relative">
        <div className="absolute left-[-1px] top-[-3px] w-[10px] h-[10px] rounded-full bg-[#e0e0e0]" />
      </div>
    </div>
    <div className="h-[33px] flex items-center border-b border-[#444444] pl-[5px] pt-[4px] shrink-0 text-[12.500px]">
      <div className="w-[129px] h-[21px] bg-[#464646] rounded-[2px] flex items-center pl-[9px] text-[#d6d6d6]">
        正常
        <Chevron className="ml-auto mr-[5px]" />
      </div>
      <div className="w-[73px] pl-[9px] text-[#c4c4c4] whitespace-nowrap">不透明度:</div>
      <div className="w-[42px] h-[19px] bg-[#3f3f3f] pl-[2px] leading-[19px] text-[#dcdcdc] font-['Liberation_Sans']">100%</div>
      <div className="w-[15px] h-[19px] ml-[1px] bg-[#4a4a4a] flex items-center justify-center"><Chevron /></div>
    </div>
    <div className="h-[36px] flex items-center pl-[7px] shrink-0 text-[12.500px] text-[#a8a8a8]">
      <span className="w-[42px] whitespace-nowrap">锁定:</span>
      <div className="w-[12px] h-[12px] bg-[repeating-conic-gradient(#9a9a9a_0_25%,#5a5a5a_0_50%)] bg-[length:6px_6px]" />
      <svg viewBox="0 0 24 24" className="w-[17px] h-[17px] ml-[9px] text-[#8a8a8a]"><BrushShape /></svg>
      <svg viewBox="0 0 24 24" className="w-[15px] h-[15px] ml-[8px]" fill="none" stroke="#dddddd" strokeWidth="2.500"><path d="M12 2v20M2 12h20" /></svg>
      <svg viewBox="0 0 24 24" className="w-[16px] h-[16px] ml-[10px]" fill="none" stroke="#c0c0c0" strokeWidth="1.500"><path d="M2 5h20M5 2v20M2 19h20M19 2v20" /></svg>
      <svg viewBox="0 0 14 16" className="w-[12px] h-[14px] ml-[10px]" fill="#dddddd"><path d="M1 7h12v8H1z" /><path d="M4 7V4a3 3 0 0 1 6 0v3" fill="none" stroke="#dddddd" strokeWidth="1.500" /></svg>
      <span className="ml-[11px] w-[37px] whitespace-nowrap">填充:</span>
      <div className="w-[42px] h-[19px] bg-[#3f3f3f] pl-[2px] leading-[19px] text-[#dcdcdc] font-['Liberation_Sans']">100%</div>
      <div className="w-[15px] h-[19px] ml-[1px] bg-[#4a4a4a] flex items-center justify-center"><Chevron /></div>
    </div>
    <div className="flex-1 flex flex-col min-h-0">
      <LayerRow
        h="h-[44px]"
        selected
        nameClass="pl-[7px] font-['Liberation_Sans'] text-[12px]"
        name="HOW IS DESIGN"
        thumb={
          <div className="w-[40px] h-[40px] relative flex items-center justify-center">
            <div className="absolute left-0 top-0 w-[10px] h-[10px] border-l border-t border-[#e8e8e8]" />
            <div className="absolute right-0 top-0 w-[10px] h-[10px] border-r border-t border-[#e8e8e8]" />
            <div className="absolute left-0 bottom-0 w-[10px] h-[10px] border-l border-b border-[#e8e8e8]" />
            <div className="absolute right-0 bottom-0 w-[10px] h-[10px] border-r border-b border-[#e8e8e8]" />
            <span className="font-['Liberation_Serif'] text-[23px] leading-none text-[#e8e8e8]">T</span>
          </div>
        }
      />
      <LayerRow h="h-[37px]" thumb={<div className="ml-[2px]"><ShapeThumb /></div>} name="形状 4" />
      <LayerRow h="h-[37px]" thumb={<div className="ml-[2px]"><ShapeThumb /></div>} name="形状 3" />
      <LayerRow h="h-[36px]" thumb={<div className="ml-[2px]"><ShapeThumb bar /></div>} name="矩形 1" />
      <LayerRow h="h-[27px]" chevron thumb={<div className="ml-[14px]"><FolderGlyph /></div>} nameClass="pl-[15px]" name="组 1 拷贝" />
      <LayerRow h="h-[29px]" chevron thumb={<div className="ml-[14px]"><FolderGlyph /></div>} nameClass="pl-[15px]" name="组 1" />
      <LayerRow h="h-[37px]" thumb={<div className="ml-[2px] w-[35px] h-[26px] bg-white border border-[#222222]" />} name="背景" locked />
    </div>
    <div className="h-[27px] bg-[#535353] border-t border-[#444444] flex items-center pl-[37px] shrink-0 relative">
      <div className="w-[30px] flex justify-center">
        <svg viewBox="0 0 18 10" className="w-[16px] h-[9px]" fill="none" stroke="#8a8a8a" strokeWidth="1.400"><path d="M7 1H4a4 4 0 0 0 0 8h3M11 1h3a4 4 0 0 1 0 8h-3M5 5h8" /></svg>
      </div>
      <div className="w-[30px] flex justify-center relative">
        <span className="font-['Liberation_Serif'] italic text-[15px] text-[#d0d0d0] leading-none">fx</span>
        <div className="absolute right-[4px] bottom-[-2px] w-0 h-0 border-x-[3px] border-x-transparent border-t-[3px] border-t-[#dddddd]" />
      </div>
      <div className="w-[30px] flex justify-center">
        <div className="w-[15px] h-[12px] bg-[#dddddd] flex items-center justify-center"><div className="w-[6px] h-[6px] rounded-full bg-[#444444]" /></div>
      </div>
      <div className="w-[30px] flex justify-center relative">
        <div className="w-[13px] h-[13px] rounded-full border border-[#dddddd] bg-[linear-gradient(135deg,transparent_50%,#dddddd_50%)]" />
        <div className="absolute right-[1px] bottom-[-2px] w-0 h-0 border-x-[3px] border-x-transparent border-t-[3px] border-t-[#dddddd]" />
      </div>
      <div className="w-[30px] flex justify-center">
        <svg viewBox="0 0 18 14" className="w-[15px] h-[12px]" fill="#c8c8c8"><path d="M0 1h6l2 2h10v11H0z" /></svg>
      </div>
      <div className="w-[30px] flex justify-center">
        <svg viewBox="0 0 14 14" className="w-[13px] h-[13px]" fill="none" stroke="#d0d0d0" strokeWidth="1.200"><path d="M1 1h12v8l-4 4H4V4H1z" /></svg>
      </div>
      <div className="w-[30px] flex justify-center">
        <svg viewBox="0 0 14 16" className="w-[12px] h-[14px]" fill="none" stroke="#c8c8c8" strokeWidth="1.200"><path d="M1 3h12M5 3V1h4v2M2 3v12h10V3M5 6v6M7 6v6M9 6v6" /></svg>
      </div>
    </div>
  </div>
);

const Watermark = () => (
  <div className="absolute left-[1229px] top-[850px] w-[290px] h-[140px] text-[#ffffffb8] pointer-events-none [text-shadow:0_0_1px_rgba(0,0,0,0.35)] font-['Liberation_Sans']">
    <div className="absolute left-0 top-[38px] text-[60px] leading-[64px] font-bold whitespace-nowrap">Bai</div>
    <svg viewBox="1320 850 90 100" className="absolute left-[91px] top-0 w-[90px] h-[100px]" fill="#ffffffb8">
      <ellipse cx="1356" cy="868" rx="10" ry="15" />
      <ellipse cx="1382" cy="870" rx="10" ry="15" transform="rotate(8 1382 870)" />
      <ellipse cx="1336" cy="888" rx="10" ry="14" transform="rotate(-10 1336 888)" />
      <ellipse cx="1398" cy="890" rx="9" ry="13" transform="rotate(10 1398 890)" />
      <path d="M1367 893c10 0 14 10 22 18 9 8 14 14 14 20 0 10-10 14-18 13-7-1-12-3-18-3s-11 3-19 3c-9 0-17-5-17-14 0-7 5-12 14-19 8-7 12-18 22-18z" />
    </svg>
    <div className="absolute left-[113px] top-[53px] text-[38px] leading-[40px] font-bold text-[#535353] [text-shadow:none]">du</div>
    <div className="absolute left-[184px] top-[49px] text-[48px] leading-[52px] font-bold font-['Noto_Sans_CJK_SC'] whitespace-nowrap">经验</div>
    <div className="absolute left-0 top-[104px] text-[33px] leading-[40px] font-['Open_Sans'] whitespace-nowrap">jingyan.baidu.com</div>
  </div>
);

const Ime = () => (
  <div className="absolute left-[466px] top-[999px] w-[169px] h-[25px] bg-white flex items-center font-['Noto_Sans_CJK_SC'] font-bold text-black text-[16px] leading-none">
    <div className="ml-[8px] h-[16px] border-l border-dotted border-[#888888]" />
    <div className="ml-[5px] w-[17px] h-[17px] bg-[#f0f0f0] border border-[#9a9a9a] text-[12px] font-normal flex items-center justify-center">拼</div>
    <span className="ml-[8px]">英</span>
    <svg viewBox="0 0 16 16" className="ml-[9px] w-[14px] h-[14px]" fill="#000"><path d="M10 1a7 7 0 1 1-8 9c3 2 7 1 8-2 1-2 1-5 0-7z" /></svg>
    <div className="ml-[6px] w-[14px] flex items-center gap-[1px]">
      <div className="w-[4px] h-[4px] bg-black rounded-full mb-[5px]" />
      <div className="w-[3px] h-[7px] bg-black rotate-[20deg]" />
    </div>
    <span className="ml-[8px]">简</span>
    <svg viewBox="0 0 16 16" className="ml-[8px] w-[15px] h-[15px]"><circle cx="8" cy="8" r="7" fill="#000" /><circle cx="6" cy="6" r="1.500" fill="#fff" /><circle cx="10" cy="6" r="1.500" fill="#fff" /><circle cx="8" cy="10" r="1.500" fill="#fff" /></svg>
    <div className="ml-[13px] flex flex-col gap-[3px]">
      <div className="w-[3px] h-[3px] bg-black" />
      <div className="w-[3px] h-[3px] bg-black" />
    </div>
  </div>
);

const App = () => (
  <div className="w-[1599px] h-[1024px] relative overflow-hidden bg-[#3a3a3a] font-['Liberation_Sans','Noto_Sans_CJK_SC',sans-serif]">
    <MenuBar />
    <OptionsBar />
    <div className="flex h-[952px]">
      <ToolBar />
      <DocArea />
      <VScroll />
      <Dock />
      <div className="flex-1 flex flex-col min-w-0">
        <div className="h-[14px] bg-[#3f3f3f] shrink-0" />
        <ColorPanel />
        <BrushPanel />
        <LayersPanel />
      </div>
    </div>

    <StatusBar />
    <Ime />

    {/* green meter, top right */}
    <div className="absolute left-[1592px] top-[29px] w-[7px] h-[65px] bg-[#222222] border border-[#bbbbbb] rounded-l-[3px] flex flex-col justify-end gap-[1px] py-[4px]">
      <div className="h-[22px] bg-[repeating-linear-gradient(180deg,#3aa04a_0,#3aa04a_2px,#1a3a20_2px,#1a3a20_3px)]" />
    </div>

    {/* annotation drawn on the screenshot */}
    <div className="absolute left-0 top-[596px] w-[50px] h-[34px] border-[3px] border-[#e5201c]" />
    <svg viewBox="0 0 1599 1024" className="absolute left-0 top-0 w-[1599px] h-[1024px] pointer-events-none">
      <polygon points="63,609.500 532.500,410.500 535,406.700 549,408 545,420 535.500,417.500 63,610.800" fill="#ff2a1a" />
    </svg>
    <Watermark />
  </div>
);

export default App;
